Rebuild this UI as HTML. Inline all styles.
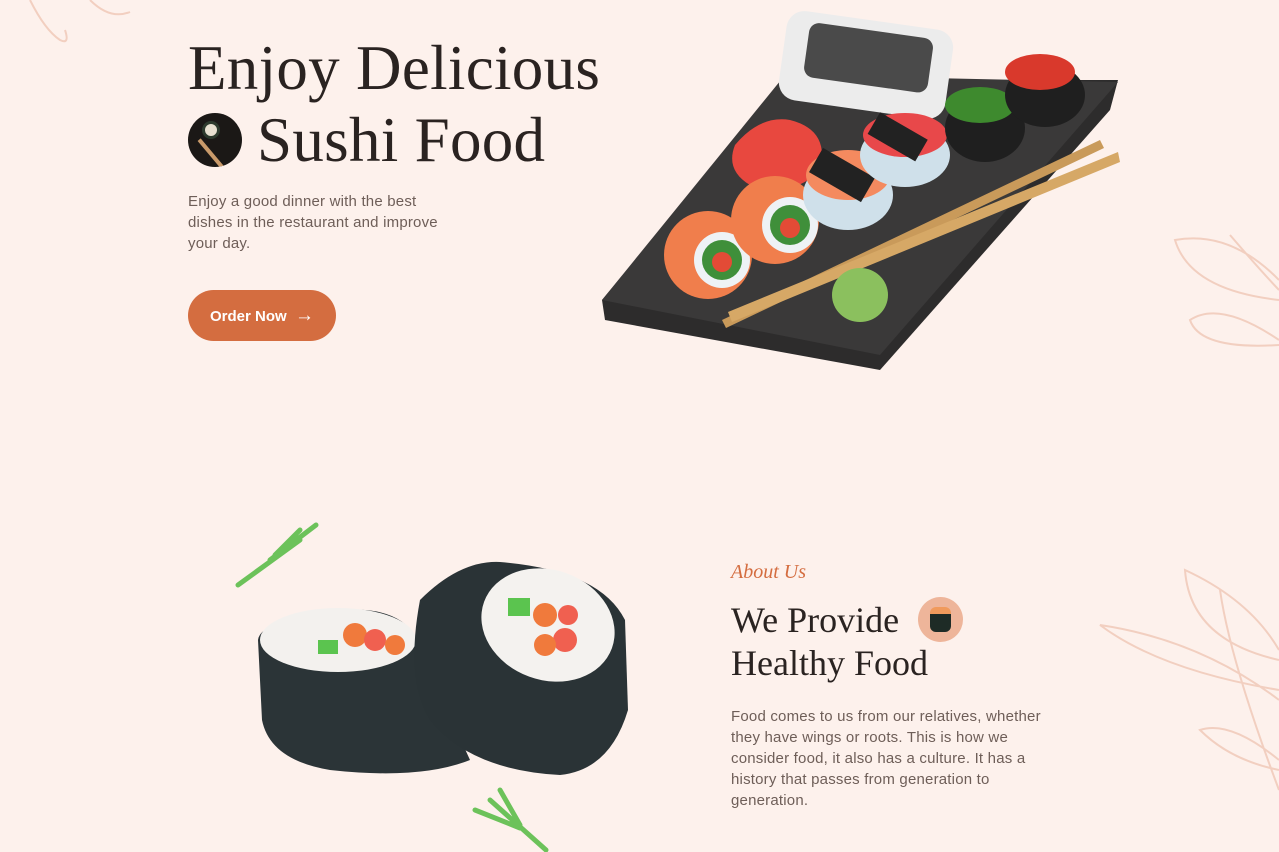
<!DOCTYPE html>
<html><head><meta charset="utf-8"><style>
*{margin:0;padding:0;box-sizing:border-box}
body{width:1279px;height:852px;background:#fdf1ec;position:relative;overflow:hidden;font-family:"Liberation Sans",sans-serif}
.h1{position:absolute;left:188px;font-family:"Liberation Serif",serif;font-size:63px;color:#2a2321;letter-spacing:0.3px;line-height:72px;white-space:nowrap}
.p{position:absolute;color:#6e5e58;font-size:15px;line-height:21px;letter-spacing:0.2px;white-space:nowrap}
.btn{position:absolute;left:188px;top:290px;width:148px;height:51px;border-radius:26px;background:#d46d40;color:#fff;font-weight:bold;font-size:15px;line-height:51px;padding-left:22px}
.h2{position:absolute;left:731px;font-family:"Liberation Serif",serif;font-size:36px;color:#2a2321;line-height:43px;white-space:nowrap}
</style></head><body>
<svg style="position:absolute;left:0;top:0" width="1279" height="852">
<g fill="none" stroke="#f2cfc0" stroke-width="2">
<path d="M30 0 Q45 30 60 40 Q70 45 65 30 M90 0 Q110 20 130 12"/>
<path d="M1279 280 Q1230 230 1175 240 Q1190 290 1279 300 M1279 340 Q1220 300 1190 320 Q1200 350 1279 345 M1230 235 Q1260 270 1279 290"/>
<path d="M1279 700 Q1200 640 1100 625 Q1160 670 1279 690 M1279 650 Q1250 600 1185 570 Q1190 640 1279 660 M1279 760 Q1230 720 1200 730 Q1230 760 1279 770 M1220 590 Q1230 660 1279 790"/>
</g>
<polygon points="602,300 785,80 1118,80 1110,110 880,370 605,320" fill="#2d2c2c"/>
<polygon points="602,300 785,75 1118,82 880,355" fill="#3a3939"/>
<rect x="782" y="20" width="168" height="90" rx="18" fill="#ececec" transform="rotate(8 866 65)"/>
<rect x="805" y="30" width="125" height="55" rx="10" fill="#4a4a4a" transform="rotate(8 866 65)"/>
<path d="M735 145 Q760 115 790 120 Q830 130 820 170 Q790 200 750 185 Q725 170 735 145Z" fill="#e8483f"/>
<g>
<circle cx="708" cy="255" r="44" fill="#f07e4c"/><circle cx="722" cy="260" r="28" fill="#eef2f5"/><circle cx="722" cy="260" r="20" fill="#3f8f3a"/><circle cx="722" cy="262" r="10" fill="#e34b36"/>
<circle cx="775" cy="220" r="44" fill="#f07e4c"/><circle cx="790" cy="225" r="28" fill="#eef2f5"/><circle cx="790" cy="225" r="20" fill="#3f8f3a"/><circle cx="790" cy="228" r="10" fill="#e34b36"/>
<ellipse cx="848" cy="195" rx="45" ry="35" fill="#cfe0ea"/><ellipse cx="848" cy="175" rx="42" ry="25" fill="#f48a5f"/><rect x="828" y="145" width="28" height="60" fill="#222" transform="rotate(-60 842 175)"/>
<ellipse cx="905" cy="155" rx="45" ry="32" fill="#cfe0ea"/><ellipse cx="905" cy="135" rx="42" ry="22" fill="#e8484a"/><rect x="885" y="110" width="25" height="55" fill="#222" transform="rotate(-60 897 137)"/>
<ellipse cx="985" cy="128" rx="40" ry="34" fill="#1f1f1f"/><ellipse cx="980" cy="105" rx="35" ry="18" fill="#3e8a2e"/>
<ellipse cx="1045" cy="95" rx="40" ry="32" fill="#1f1f1f"/><ellipse cx="1040" cy="72" rx="35" ry="18" fill="#d9392c"/>
<path d="M722 320 L1100 140 L1104 148 L726 328Z" fill="#c99a5a"/><path d="M728 312 L1118 152 L1120 162 L732 322Z" fill="#d6a866"/>
<ellipse cx="860" cy="295" rx="28" ry="27" fill="#8bc05e"/>
</g>
<path d="M258 640 Q260 620 340 610 Q410 605 420 650 L470 760 Q420 780 330 770 Q270 760 262 720Z" fill="#2b3437"/>
<ellipse cx="338" cy="640" rx="78" ry="32" fill="#f3f1ee"/>
<circle cx="355" cy="635" r="12" fill="#f07a3c"/><circle cx="375" cy="640" r="11" fill="#f06050"/><circle cx="395" cy="645" r="10" fill="#f07a3c"/><rect x="318" y="640" width="20" height="14" fill="#5bc44f"/>
<path d="M420 600 Q460 560 500 562 Q600 570 625 620 L628 710 Q610 770 560 775 Q470 770 430 720 Q405 680 420 600Z" fill="#2a3336"/>
<ellipse cx="548" cy="625" rx="68" ry="55" fill="#f4f2ef" transform="rotate(20 548 625)"/>
<circle cx="545" cy="615" r="12" fill="#f07a3c"/><circle cx="565" cy="640" r="12" fill="#f06050"/><circle cx="545" cy="645" r="11" fill="#f07a3c"/><circle cx="568" cy="615" r="10" fill="#f06050"/><rect x="508" y="598" width="22" height="18" fill="#5bc44f"/>
<g stroke="#6cc25a" stroke-width="5" stroke-linecap="round" fill="none"><path d="M238 585 L300 540 M270 560 L316 525 M275 555 L300 530"/><path d="M546 850 L490 800 M520 828 L475 810 M520 825 L500 790"/></g>
</svg>
<div class="h1" style="top:32px">Enjoy Delicious</div>
<div style="position:absolute;left:188px;top:113px;width:54px;height:54px;border-radius:50%;background:#1b1816;overflow:hidden"><div style="position:absolute;left:14px;top:8px;width:18px;height:18px;border-radius:50%;background:#e8e0d0;border:3px solid #2d3a2d"></div><div style="position:absolute;left:22px;top:22px;width:4px;height:40px;background:#c99a6a;transform:rotate(-40deg)"></div></div>
<div class="h1" style="top:104px;left:257px">Sushi Food</div>
<div class="p" style="left:188px;top:191px">Enjoy a good dinner with the best<br>dishes in the restaurant and improve<br>your day.</div>
<div class="btn">Order Now &nbsp;<span style="font-size:19px">→</span></div>
<div style="position:absolute;left:731px;top:561px;font-family:'Liberation Serif',serif;font-style:italic;color:#d46d40;font-size:20px">About Us</div>
<div class="h2" style="top:599px">We Provide</div>
<div style="position:absolute;left:918px;top:597px;width:45px;height:45px;border-radius:50%;background:#eeb59a"><div style="position:absolute;left:12px;top:10px;width:21px;height:25px;border-radius:6px;background:#1e2b26;border-top:7px solid #f09a5c"></div></div>
<div class="h2" style="top:642px">Healthy Food</div>
<div class="p" style="left:731px;top:706px">Food comes to us from our relatives, whether<br>they have wings or roots. This is how we<br>consider food, it also has a culture. It has a<br>history that passes from generation to<br>generation.</div>
</body></html>
